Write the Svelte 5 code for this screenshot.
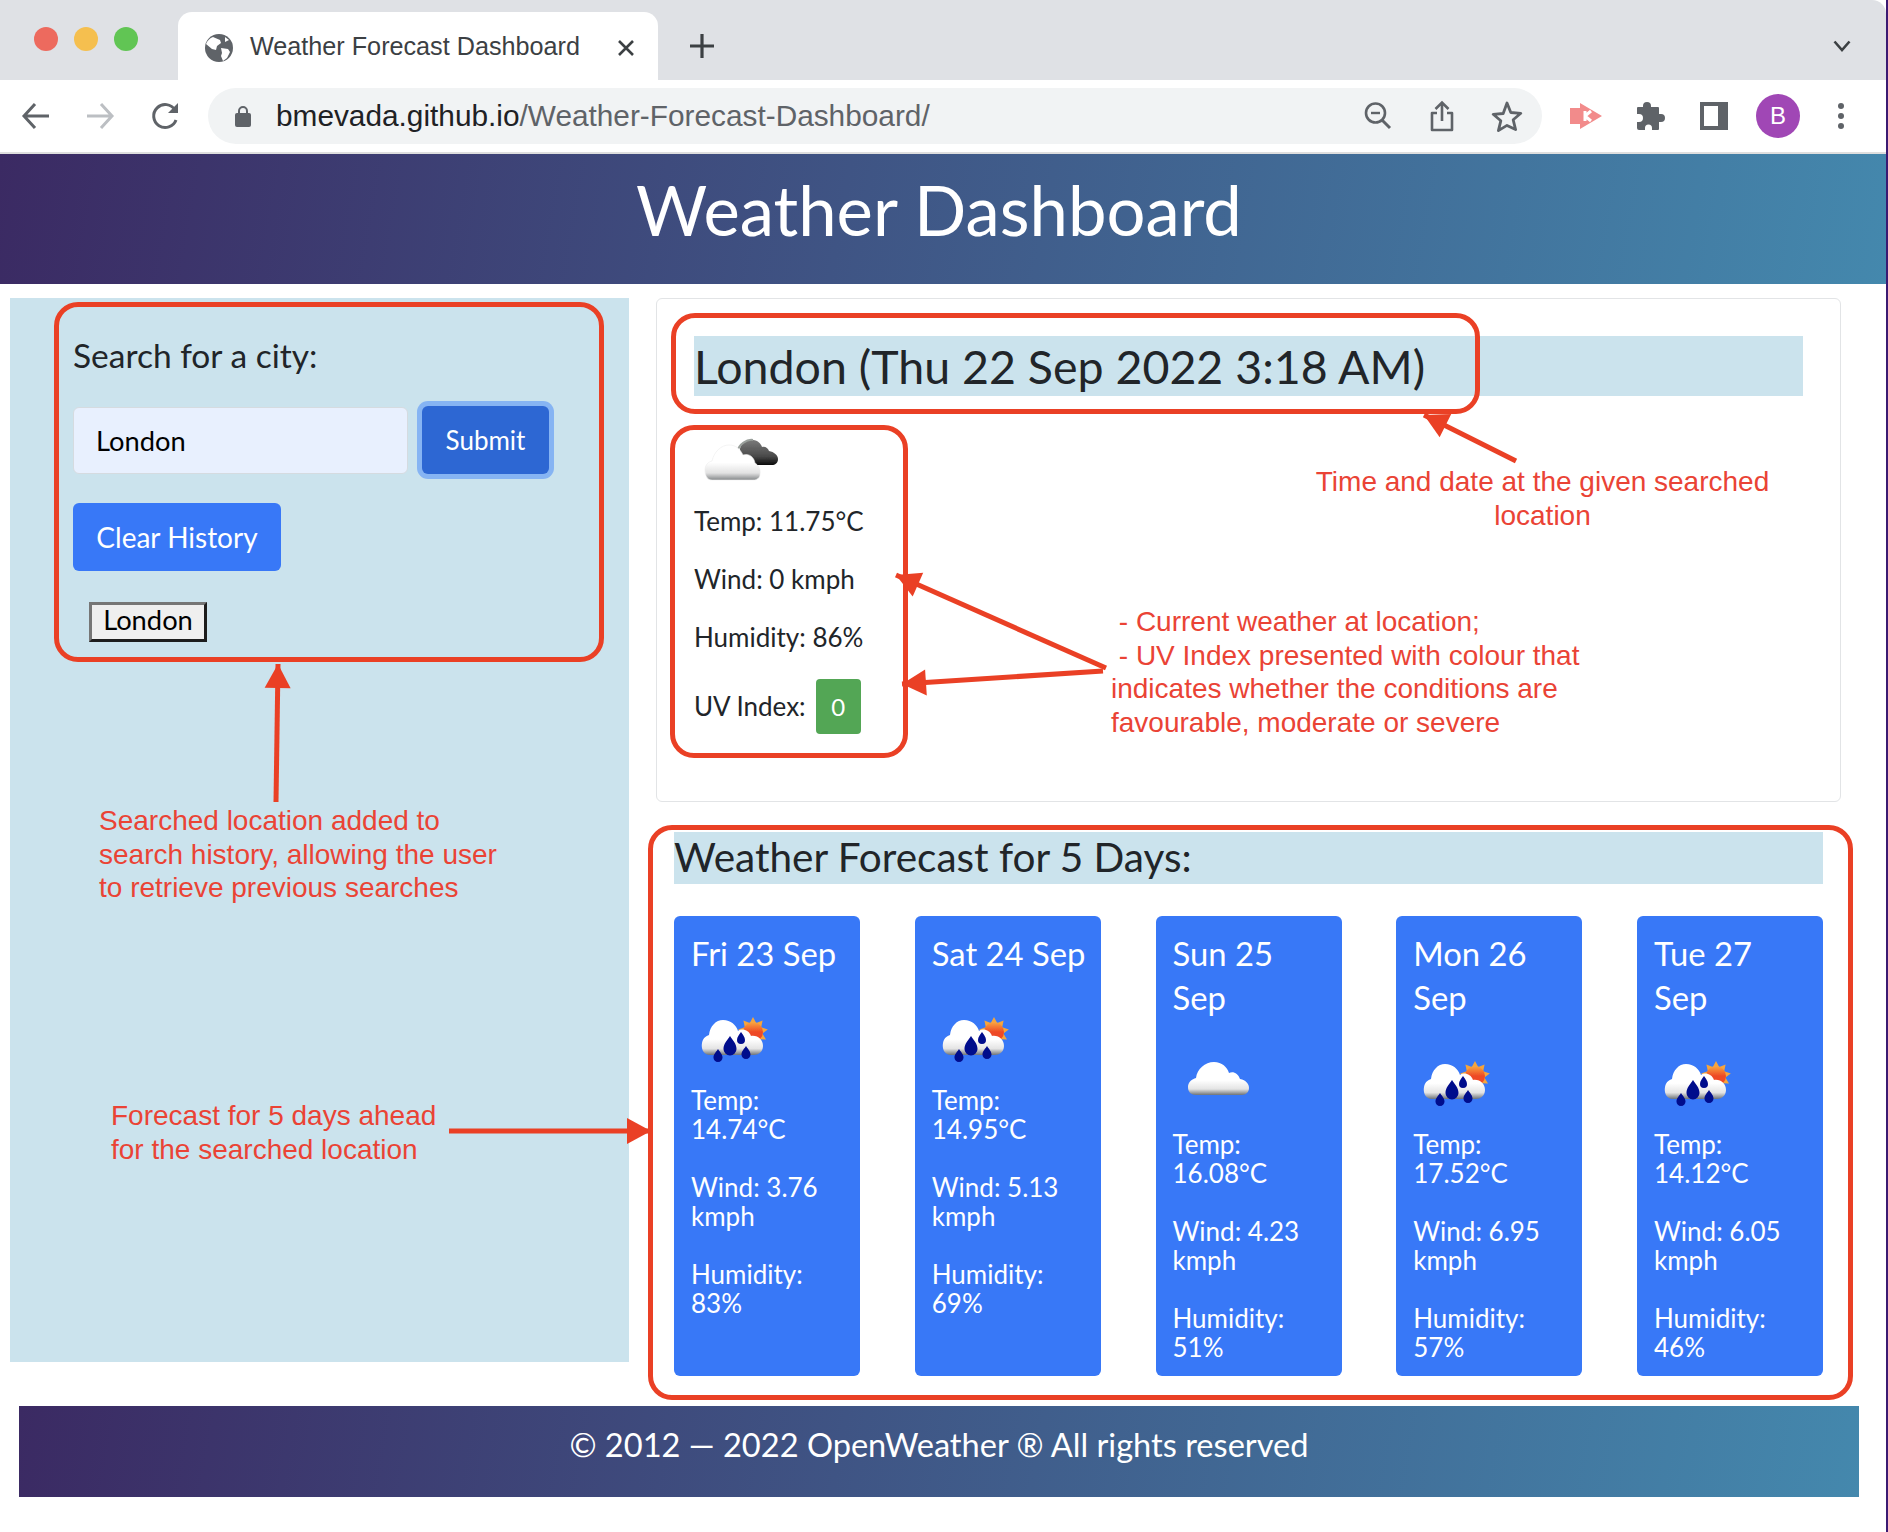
<script lang="ts">
	type Day = { date: string; icon: 'rain' | 'cloud'; temp: string; wind: string; humidity: string };

	const days: Day[] = [
		{ date: 'Fri 23 Sep', icon: 'rain', temp: '14.74°C', wind: '3.76', humidity: '83%' },
		{ date: 'Sat 24 Sep', icon: 'rain', temp: '14.95°C', wind: '5.13', humidity: '69%' },
		{ date: 'Sun 25\nSep', icon: 'cloud', temp: '16.08°C', wind: '4.23', humidity: '51%' },
		{ date: 'Mon 26\nSep', icon: 'rain', temp: '17.52°C', wind: '6.95', humidity: '57%' },
		{ date: 'Tue 27\nSep', icon: 'rain', temp: '14.12°C', wind: '6.05', humidity: '46%' }
	];

	// annotation arrows: shaft start, then tip
	const arrows = [
		[276, 802, 278, 664],
		[1516, 461, 1424, 415],
		[1106, 668, 896, 575],
		[1103, 671, 902, 684],
		[449, 1131, 651, 1131]
	];

	function head(a: number[]) {
		const [x1, y1, x2, y2] = a;
		const len = Math.hypot(x2 - x1, y2 - y1);
		const ux = (x2 - x1) / len;
		const uy = (y2 - y1) / len;
		const bx = x2 - ux * 24;
		const by = y2 - uy * 24;
		return `${x2},${y2} ${bx - uy * 13},${by + ux * 13} ${bx + uy * 13},${by - ux * 13}`;
	}

	// sun rays for the rain icon
	function star(cx: number, cy: number, outer: number, inner: number, n: number) {
		const pts = [];
		for (let i = 0; i < n * 2; i++) {
			const r = i % 2 ? inner : outer;
			const t = (Math.PI * i) / n - Math.PI / 2;
			pts.push(`${(cx + r * Math.cos(t)).toFixed(1)},${(cy + r * Math.sin(t)).toFixed(1)}`);
		}
		return pts.join(' ');
	}
	const rays = star(53, 36, 15, 9.5, 9);
</script>

{#snippet rainIcon()}
	<svg class="wx" viewBox="0 0 80 70" width="80" height="70">
		<g filter="url(#soft)">
			<polygon points={rays} fill="#f5a53c" />
			<circle cx="53" cy="36" r="10" fill="url(#sun)" />
			<path d="M10 59C3 59 1 52 2 47C3 42 6 40 9 39C10 30 16 24 23 24C31 24 36 29 38 35C42 32 49 34 51 40C58 39 63 44 63 50C63 56 58 59 54 59Z" fill="url(#cloud)" />
		</g>
		<g fill="#00088c" filter="url(#soft2)">
			<path d="M30 40c2.500 4 6.500 7.500 6.500 13a6.500 6.500 0 0 1-13 0c0-5.500 4-9 6.500-13z" />
			<path d="M41 36c1.500 2.500 4 4.500 4 8a4 4 0 0 1-8 0c0-3.500 2.500-5.500 4-8z" />
			<path d="M18 53c1.500 2.500 4.500 5 4.500 8.500a4.500 4.500 0 0 1-9 0c0-3.500 3-6 4.500-8.500z" />
			<path d="M46 50c1.500 2.500 4.500 5 4.500 8.500a4.500 4.500 0 0 1-9 0c0-3.500 3-6 4.500-8.500z" />
		</g>
	</svg>
{/snippet}

{#snippet cloudIcon()}
	<svg class="wx" viewBox="0 0 80 40" width="80" height="40">
		<path filter="url(#soft)" d="M14 40C8 40 6 36 6 32C6 27 10 24 14 23C15 14 23 7 32 7C40 7 45 12 47 18C51 16 56 18 58 24C64 25 67 29 67 33C67 37 64 40 60 40Z" fill="url(#cloud)" />
	</svg>
{/snippet}

{#snippet nowIcon()}
	<svg class="now-wx" viewBox="0 0 80 50" width="80" height="50">
		<g filter="url(#soft)">
			<path d="M39 14c1-6 7-10 13-9 5 0 8 4 9 7 3-1 6 1 7 4 5 1 9 4 9 8 0 4-3 6-6 6H52c-8 0-13-8-13-16z" fill="url(#dark)" />
			<path d="M36 17c2-8 10-13 16-12" fill="none" stroke="#9aa09c" stroke-width="2" />
			<path d="M11 45C6 45 4 40 4 35C4 30 7 27 11 26C13 17 20 10 28 10C35 10 39 14 42 20C48 18 53 22 54 28C57 30 60 34 59 39C59 43 56 45 52 45Z" fill="url(#cloud2)" stroke="#ececec" stroke-width="0.6" />
		</g>
	</svg>
{/snippet}

<svg class="defs" width="0" height="0" aria-hidden="true">
	<defs>
		<linearGradient id="cloud" x1="0" y1="0" x2="0" y2="1">
			<stop offset="0.55" stop-color="#ffffff" />
			<stop offset="0.82" stop-color="#e4e4e4" />
			<stop offset="1" stop-color="#6f7478" />
		</linearGradient>
		<linearGradient id="cloud2" x1="0" y1="0" x2="0" y2="1">
			<stop offset="0.5" stop-color="#ffffff" />
			<stop offset="0.8" stop-color="#e2e2e2" />
			<stop offset="1" stop-color="#85888a" />
		</linearGradient>
		<linearGradient id="dark" x1="0" y1="0" x2="0" y2="1">
			<stop offset="0" stop-color="#7a7a7a" />
			<stop offset="0.65" stop-color="#4a4a4a" />
			<stop offset="1" stop-color="#0c0c0c" />
		</linearGradient>
		<linearGradient id="sun" x1="0" y1="0" x2="0" y2="1">
			<stop offset="0" stop-color="#f9a741" />
			<stop offset="0.5" stop-color="#ee4a26" />
		</linearGradient>
		<filter id="soft" x="-10%" y="-10%" width="120%" height="120%"><feGaussianBlur stdDeviation="0.7" /></filter>
		<filter id="soft2" x="-10%" y="-10%" width="120%" height="120%"><feGaussianBlur stdDeviation="0.4" /></filter>
	</defs>
</svg>

<div class="page">
	<div class="tabstrip">
		<div class="lights">
			<span class="light red"></span>
			<span class="light yellow"></span>
			<span class="light green"></span>
		</div>
		<div class="tab">
			<svg width="30" height="30" viewBox="0 0 30 30">
				<circle cx="15" cy="15" r="14" fill="#5f6368" />
				<path d="M9 4l7 3 1 3-4 3-1 4-4-1-6-5c1-3 4-6 7-7zM17 15l7 1 2 3-3 6-4 3-2-5 1-3zM21 4l4 3-4 2z" fill="#fff" />
			</svg>
			<span class="tab-title">Weather Forecast Dashboard</span>
			<svg class="tab-x" width="18" height="18" viewBox="0 0 18 18">
				<path d="M2 2l14 14M16 2L2 16" stroke="#3c4043" stroke-width="2.600" />
			</svg>
		</div>
		<svg class="plus" width="26" height="26" viewBox="0 0 26 26">
			<path d="M13 1v24M1 13h24" stroke="#3c4043" stroke-width="3.200" />
		</svg>
		<svg class="chev" width="18" height="12" viewBox="0 0 18 12">
			<path d="M1.500 1.500L9 10l7.500-8.500" fill="none" stroke="#3c4043" stroke-width="2.600" />
		</svg>
	</div>

	<div class="toolbar">
		<div class="nav">
			<svg width="30" height="28" viewBox="0 0 30 28">
				<path d="M28 14H3M14 2L3 14l11 12" fill="none" stroke="#5f6368" stroke-width="3" />
			</svg>
			<svg width="30" height="28" viewBox="0 0 30 28">
				<path d="M2 14h25M16 2l11 12-11 12" fill="none" stroke="#bcbfc3" stroke-width="3" />
			</svg>
			<svg class="reload" width="30" height="30" viewBox="0 0 30 30">
				<path d="M25 19a11.500 11.500 0 1 1-1-10" fill="none" stroke="#5f6368" stroke-width="3" />
				<path d="M27 2v10H17z" fill="#5f6368" />
			</svg>
		</div>
		<div class="omnibox">
			<svg width="16" height="22" viewBox="0 0 16 22">
				<path d="M4 9V6a4 4 0 0 1 8 0v3" fill="none" stroke="#5f6368" stroke-width="2" />
				<rect y="8" width="16" height="14" rx="2" fill="#5f6368" />
			</svg>
			<span class="url"><b>bmevada.github.io</b>/Weather-Forecast-Dashboard/</span>
			<div class="omni-icons">
				<svg width="30" height="30" viewBox="0 0 30 30">
					<circle cx="12.500" cy="12" r="9.500" fill="none" stroke="#5f6368" stroke-width="2.600" />
					<path d="M8 12h9" stroke="#5f6368" stroke-width="2.400" />
					<path d="M19 19l8 8" stroke="#5f6368" stroke-width="3" />
				</svg>
				<svg width="26" height="32" viewBox="0 0 26 32">
					<path d="M8 13H3v17h20V13h-5" fill="none" stroke="#5f6368" stroke-width="2.600" stroke-linejoin="round" />
					<path d="M13 21V3M6.500 9L13 2.500 19.500 9" fill="none" stroke="#5f6368" stroke-width="2.600" />
				</svg>
				<svg width="32" height="32" viewBox="0 0 32 32">
					<path d="M16 3l3.800 9.500 10 .8-7.600 6.500 2.400 9.800L16 25.400l-8.600 5.200 2.400-9.800-7.600-6.500 10-.8z" fill="none" stroke="#5f6368" stroke-width="2.800" stroke-linejoin="round" />
				</svg>
			</div>
		</div>
		<div class="ext">
			<svg width="32" height="26" viewBox="0 0 32 26">
				<path d="M0 5h10V0l22 13-22 13v-5H0z" fill="#f28b8b" />
				<path d="M15 8v10M15 13l6-5M15 13l6 5" stroke="#fff" stroke-width="3" />
			</svg>
			<svg width="30" height="30" viewBox="0 0 30 30">
				<path d="M11 1a4 4 0 0 1 4 4v1h7a1 1 0 0 1 1 1v6h2a4 4 0 0 1 0 8h-2v7a1 1 0 0 1-1 1h-6v-2a3.500 3.500 0 0 0-7 0v2H3a2 2 0 0 1-2-2v-6h2a4 4 0 0 0 0-8H1V7a1 1 0 0 1 1-1h5V5a4 4 0 0 1 4-4z" fill="#5f6368" />
			</svg>
			<span class="panel"></span>
			<span class="avatar">B</span>
			<span class="dots"><i></i><i></i><i></i></span>
		</div>
	</div>

	<header class="banner"><h1>Weather Dashboard</h1></header>

	<div class="content">
		<aside class="side">
			<form class="search-form">
				<label for="city">Search for a city:</label>
				<div class="search-row">
					<input id="city" value="London" />
					<button type="button" class="btn submit">Submit</button>
				</div>
				<button type="button" class="btn clear">Clear History</button>
				<button type="button" class="history">London</button>
			</form>
		</aside>

		<main class="results">
			<section class="current">
				<h2>London (Thu 22 Sep 2022 3:18 AM)</h2>
				{@render nowIcon()}
				<p>Temp: 11.75°C</p>
				<p>Wind: 0 kmph</p>
				<p>Humidity: 86%</p>
				<p class="uv">UV Index: <span class="badge">0</span></p>
			</section>

			<section class="forecast">
				<h3>Weather Forecast for 5 Days:</h3>
				<div class="cards">
					{#each days as day (day.date)}
						<article class="card">
							<h5>{day.date}</h5>
							<div class="wx-box">
								{#if day.icon === 'rain'}
									{@render rainIcon()}
								{:else}
									{@render cloudIcon()}
								{/if}
							</div>
							<p>Temp:<br />{day.temp}</p>
							<p>Wind: {day.wind}<br />kmph</p>
							<p>Humidity:<br />{day.humidity}</p>
						</article>
					{/each}
				</div>
			</section>
		</main>
	</div>

	<footer class="foot">© 2012 — 2022 OpenWeather ® All rights reserved</footer>

	<!-- annotations drawn on top of the screenshot -->
	<div class="note-box box-search"></div>
	<div class="note-box box-title"></div>
	<div class="note-box box-now"></div>
	<div class="note-box box-forecast"></div>

	<svg class="arrows" width="1888" height="1532" viewBox="0 0 1888 1532">
		{#each arrows as a}
			<line x1={a[0]} y1={a[1]} x2={a[2]} y2={a[3]} stroke="#ea4025" stroke-width="5" />
			<polygon points={head(a)} fill="#ea4025" />
		{/each}
	</svg>

	<p class="note n-search">Searched location added to<br />search history, allowing the user<br />to retrieve previous searches</p>
	<p class="note n-ahead">Forecast for 5 days ahead<br />for the searched location</p>
	<p class="note n-time">Time and date at the given searched<br />location</p>
	<p class="note n-now">&nbsp;- Current weather at location;<br />&nbsp;- UV Index presented with colour that<br />indicates whether the conditions are<br />favourable, moderate or severe</p>
</div>

<style>
	:global(body) {
		margin: 0;
		background: #fff;
	}
	.defs {
		position: absolute;
	}
	.page {
		position: relative;
		width: 1886px;
		height: 1532px;
		border-right: 2px solid #3b1a72;
		overflow: hidden;
		font-family: Lato, 'Open Sans', sans-serif;
		color: #212529;
		background: #fff;
	}
	p,
	h1,
	h2,
	h3,
	h5 {
		margin: 0;
		font-weight: 400;
	}

	.tabstrip {
		height: 80px;
		background: #dfe1e5;
		border-top-right-radius: 14px;
		display: flex;
		align-items: flex-end;
	}
	.lights {
		display: flex;
		gap: 16px;
		padding: 0 0 29px 34px;
		width: 144px;
		box-sizing: border-box;
	}
	.light {
		width: 24px;
		height: 24px;
		border-radius: 50%;
		flex: none;
	}
	.red {
		background: #ed6a5e;
	}
	.yellow {
		background: #f5bf4f;
	}
	.green {
		background: #61c554;
	}
	.tab {
		width: 480px;
		height: 68px;
		margin-left: 34px;
		background: #fff;
		border-radius: 14px 14px 0 0;
		display: flex;
		align-items: center;
		padding: 4px 23px 0 26px;
		box-sizing: border-box;
		font-family: 'Liberation Sans', Arial, sans-serif;
	}
	.tab-title {
		margin: -3px 0 0 16px;
		font-size: 25.200px;
		color: #3c4043;
		white-space: nowrap;
		flex: 1;
	}
	.plus {
		margin: 0 0 21px 31px;
	}
	.chev {
		margin: 0 35px 28px auto;
	}

	.toolbar {
		height: 72px;
		background: #fff;
		border-bottom: 2px solid #dedede;
		display: flex;
		align-items: center;
	}
	.nav {
		width: 208px;
		padding-left: 21px;
		box-sizing: border-box;
		display: flex;
		align-items: center;
		gap: 34px;
		flex: none;
	}
	.reload {
		margin-left: 2px;
	}
	.omnibox {
		width: 1334px;
		height: 56px;
		border-radius: 28px;
		background: #f1f3f4;
		display: flex;
		align-items: center;
		padding: 0 19px 0 27px;
		box-sizing: border-box;
		flex: none;
		font-family: 'Liberation Sans', Arial, sans-serif;
	}
	.url {
		margin-left: 25px;
		font-size: 29.800px;
		color: #5f6368;
		white-space: nowrap;
	}
	.url b {
		font-weight: 400;
		color: #202124;
	}
	.omni-icons {
		margin-left: auto;
		display: flex;
		align-items: center;
		gap: 36px;
	}
	.ext {
		display: flex;
		align-items: center;
		gap: 34px;
		margin-left: 28px;
	}
	.panel {
		width: 28px;
		height: 28px;
		box-sizing: border-box;
		border: solid #5f6368;
		border-width: 4px 10px 4px 4px;
		background: #fff;
	}
	.avatar {
		width: 44px;
		height: 44px;
		margin: 0 0 0 -6px;
		border-radius: 50%;
		background: #a047b5;
		color: #fff;
		display: flex;
		align-items: center;
		justify-content: center;
		font: 24px 'Liberation Sans', Arial, sans-serif;
	}
	.dots {
		display: flex;
		flex-direction: column;
		gap: 4px;
		margin-left: 4px;
	}
	.dots i {
		width: 6px;
		height: 6px;
		border-radius: 50%;
		background: #5f6368;
	}

	.banner,
	.foot {
		background: linear-gradient(100deg, #3b2a63, #4488ad);
		color: #fff;
		text-align: center;
	}
	.banner {
		height: 130px;
		display: flex;
		align-items: center;
		justify-content: center;
	}
	.banner h1 {
		font-size: 68.800px;
		line-height: 1;
		padding: 0 8px 18px 0;
	}

	.content {
		display: flex;
		align-items: flex-start;
		gap: 27px;
		padding: 14px 0 0 10px;
	}
	.side {
		width: 619px;
		height: 1064px;
		background: #cbe3ed;
		flex: none;
	}
	.search-form {
		padding: 34px 0 0 63px;
		display: flex;
		flex-direction: column;
		align-items: flex-start;
	}
	label {
		font-size: 33.500px;
		line-height: 46px;
		margin-bottom: 28px;
	}
	.search-row {
		display: flex;
		align-items: center;
		gap: 14px;
	}
	input {
		width: 335px;
		height: 67px;
		box-sizing: border-box;
		padding: 0 22px;
		font: 27.300px Lato, sans-serif;
		color: #000;
		background: #e8f0fe;
		border: 1px solid #d5dbe0;
		border-radius: 6px;
	}
	.btn {
		border: 0;
		border-radius: 6px;
		color: #fff;
		font: 28px Lato, sans-serif;
		padding: 0;
	}
	.submit {
		width: 127px;
		height: 68px;
		background: #2d67d3;
		box-shadow: 0 0 0 5px #86b4f3;
		font-size: 26px;
	}
	.clear {
		width: 208px;
		height: 68px;
		margin-top: 29px;
		background: #3878f7;
	}
	.history {
		margin: 31px 0 0 16px;
		width: 118px;
		height: 40px;
		padding: 0 0 4px;
		box-sizing: border-box;
		font: 27.300px/28px Lato, sans-serif;
		color: #000;
		background: #efefef;
		border: 3px solid;
		border-color: #767676 #1d1d1d #1d1d1d #767676;
	}

	.results {
		width: 1185px;
		flex: none;
	}
	.current {
		height: 504px;
		box-sizing: border-box;
		border: 1px solid #e2e4e6;
		border-radius: 6px;
		padding: 37px 37px 0;
		font-size: 26px;
	}
	.current h2 {
		height: 60px;
		line-height: 60px;
		background: #cbe3ed;
		font-size: 46.500px;
		white-space: nowrap;
	}
	.now-wx {
		display: block;
		margin: 39px 0 0 7px;
		height: 50px;
	}
	.current p {
		line-height: 29px;
		margin-bottom: 29px;
	}
	.current p:first-of-type {
		margin-top: 22px;
	}
	.uv {
		display: flex;
		align-items: center;
		gap: 10px;
		margin-top: -2px;
	}
	.badge {
		width: 45px;
		height: 55px;
		border-radius: 4px;
		background: #53a655;
		color: #fff;
		display: flex;
		align-items: center;
		justify-content: center;
		font-size: 24px;
	}

	.forecast {
		margin: 30px 0 0 18px;
		width: 1149px;
	}
	.forecast h3 {
		height: 52px;
		line-height: 50px;
		background: #cbe3ed;
		font-size: 40.500px;
	}
	.cards {
		margin-top: 32px;
		display: flex;
		justify-content: space-between;
	}
	.card {
		width: 186px;
		height: 460px;
		box-sizing: border-box;
		padding: 16px 17px;
		background: #3878f7;
		border-radius: 6px;
		color: #fff;
		font-size: 26px;
	}
	.card h5 {
		font-size: 32.800px;
		line-height: 44px;
		white-space: pre;
	}
	.wx-box {
		height: 110px;
		display: flex;
		align-items: center;
	}
	.wx {
		display: block;
		margin-left: 9px;
		flex: none;
	}
	.card p {
		line-height: 29px;
		margin-bottom: 29px;
	}

	.foot {
		margin: 30px 0 0 19px;
		width: 1840px;
		height: 91px;
		line-height: 78px;
		font-size: 32.600px;
	}

	.note-box {
		position: absolute;
		box-sizing: border-box;
		border: 5px solid #ea4025;
		border-radius: 24px;
	}
	.box-search {
		left: 54px;
		top: 302px;
		width: 550px;
		height: 360px;
	}
	.box-title {
		left: 671px;
		top: 313px;
		width: 809px;
		height: 101px;
	}
	.box-now {
		left: 670px;
		top: 425px;
		width: 238px;
		height: 333px;
	}
	.box-forecast {
		left: 648px;
		top: 825px;
		width: 1205px;
		height: 575px;
	}
	.arrows {
		position: absolute;
		left: 0;
		top: 0;
		pointer-events: none;
	}
	.note {
		position: absolute;
		font: 28px/33.700px 'Liberation Sans', Arial, sans-serif;
		color: #ea4335;
		white-space: nowrap;
	}
	.n-search {
		left: 99px;
		top: 804px;
	}
	.n-ahead {
		left: 111px;
		top: 1099px;
	}
	.n-time {
		left: 1240px;
		width: 605px;
		top: 465px;
		text-align: center;
	}
	.n-now {
		left: 1111px;
		top: 605px;
	}
</style>
